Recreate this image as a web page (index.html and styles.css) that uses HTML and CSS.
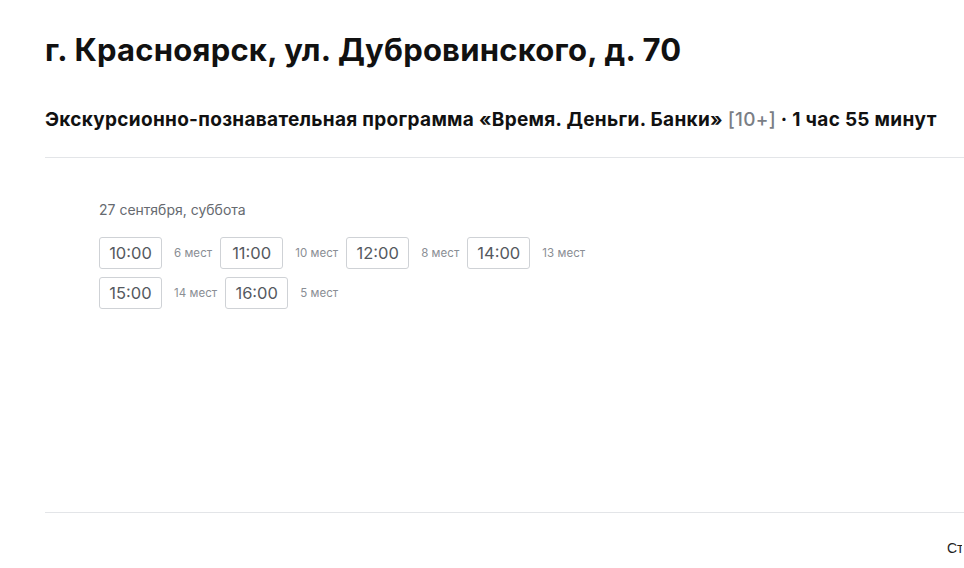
FILE: index.html
```html
<!DOCTYPE html>
<html lang="ru">
<head>
<meta charset="utf-8">
<title>Экскурсия</title>
<link rel="stylesheet" href="styles.css">
</head>
<body>
<div class="page">
  <h1 class="title">г. Красноярск, ул. Дубровинского, д. 70</h1>
  <h2 class="subtitle">Экскурсионно-познавательная программа «Время. Деньги. Банки» <span class="age">[10+]</span> · 1 час 55 минут</h2>
  <section class="schedule">
    <div class="date">27 сентября, суббота</div>
    <div class="slots first">
      <div class="slot"><button class="time">10:00</button><span class="seats">6 мест</span></div>
      <div class="slot"><button class="time">11:00</button><span class="seats">10 мест</span></div>
      <div class="slot"><button class="time">12:00</button><span class="seats">8 мест</span></div>
      <div class="slot"><button class="time">14:00</button><span class="seats">13 мест</span></div>
    </div>
    <div class="slots">
      <div class="slot"><button class="time">15:00</button><span class="seats">14 мест</span></div>
      <div class="slot"><button class="time">16:00</button><span class="seats">5 мест</span></div>
    </div>
  </section>
  <footer class="footer"><span class="price">Стоимость</span></footer>
</div>
</body>
</html>
```

FILE: styles.css
```css
html, body {
  margin: 0;
  padding: 0;
  overflow: hidden;
  background: #fff;
}
body {
  font-family: Inter, "Noto Sans", sans-serif;
  color: #1a1a1a;
}
.page {
  margin-left: 45px;
  width: 919px;
  padding-top: 30px;
  overflow: hidden;
}
.title {
  margin: 0;
  font-size: 31px;
  line-height: 40px;
  font-weight: 700;
  color: #111;
  letter-spacing: 0.22px;
}
.subtitle {
  margin: 37px 0 0;
  font-size: 19px;
  line-height: 26px;
  font-weight: 700;
  color: #111;
  letter-spacing: 0.3px;
  padding-bottom: 24px;
  border-bottom: 1px solid #e3e5e8;
}
.age {
  color: #7a7e85;
  font-weight: 500;
}
.schedule {
  padding: 43px 0 0 54px;
  height: 355px;
  border-bottom: 1px solid #e3e5e8;
  box-sizing: border-box;
}
.date {
  font-size: 14px;
  color: #666a70;
  line-height: 18px;
}
.slots {
  display: flex;
  margin-top: 8px;
}
.slots.first { margin-top: 18px; }
.slot {
  display: flex;
  align-items: center;
}
.time {
  width: 63px;
  height: 32px;
  border: 1px solid #cfd2d6;
  border-radius: 3px;
  background: #fff;
  font-family: Inter, "Noto Sans", sans-serif;
  font-size: 16.5px;
  color: #555960;
  padding: 0;
}
.seats {
  font-size: 11.5px;
  letter-spacing: 0.05px;
  color: #8a8e94;
  margin: 0 8px 0 12px;
}
.footer {
  width: 917px;
  overflow: hidden;
  padding-top: 27px;
}
.price {
  display: block;
  margin-left: 902px;
  font-family: "Liberation Sans", Arial, sans-serif;
  font-size: 14px;
  color: #222;
  white-space: nowrap;
}
```
